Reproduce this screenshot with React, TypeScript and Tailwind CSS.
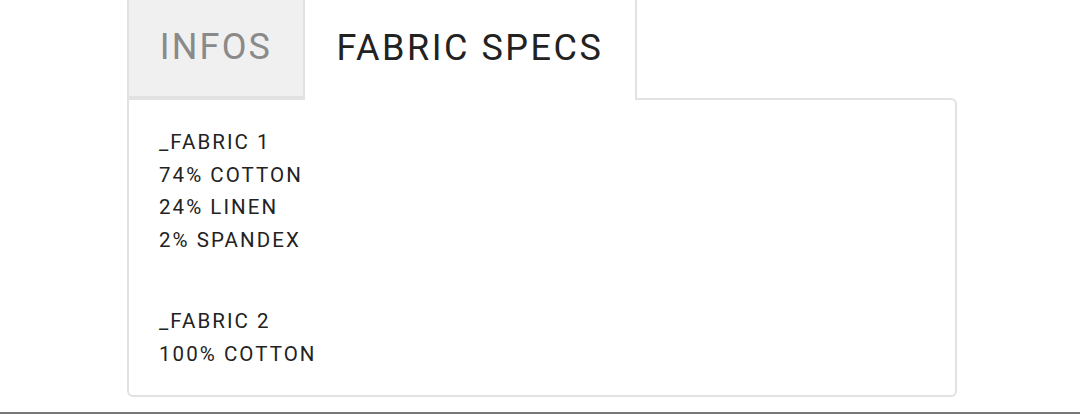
export default function App() {
  const fabrics = [
    { name: "_FABRIC 1", lines: ["74% COTTON", "24% LINEN", "2% SPANDEX"] },
    { name: "_FABRIC 2", lines: ["100% COTTON"] },
  ];

  return (
    <div
      className="relative h-[414px] w-[1080px] overflow-hidden bg-white"
      style={{ fontFamily: "Roboto, 'Liberation Sans', sans-serif" }}
    >
      <div className="ml-[127px] w-[830px]">
        {/* tabs */}
        <div className="flex h-[98px]">
          <div className="flex w-[178px] items-center justify-center border-l-2 border-r-2 border-b-2 border-[#e2e2e2] bg-[#f0f0f0] pb-[2px]">
            <span className="text-[36px] tracking-[0.06em] text-[#8a8a8a]">INFOS</span>
          </div>
          <div className="relative z-10 -mb-[2px] flex h-[100px] w-[332px] items-center justify-center border-r-2 border-[#e2e2e2] bg-white pb-[4px]">
            <span className="text-[36px] tracking-[0.07em] text-[#222]">FABRIC SPECS</span>
          </div>
        </div>

        {/* panel */}
        <div className="h-[299px] rounded-b-[6px] rounded-tr-[6px] border-2 border-[#e2e2e2] bg-white pl-[30px] pt-[26px] text-[20.5px] leading-[32.5px] tracking-[0.1em] text-[#222]">
          {fabrics.map((f, i) => (
            <div key={f.name} className={i > 0 ? "mt-[49px]" : ""}>
              <div>{f.name}</div>
              {f.lines.map((l) => (
                <div key={l}>{l}</div>
              ))}
            </div>
          ))}
        </div>
      </div>

      <div className="absolute bottom-0 left-0 h-[2px] w-full bg-[#777]" />
    </div>
  );
}
